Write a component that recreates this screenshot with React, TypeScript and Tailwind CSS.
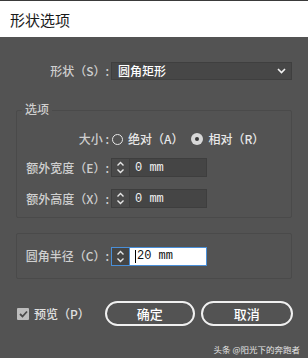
import React from "react";

const font = { fontFamily: '"Noto Sans CJK SC", "Noto Sans", sans-serif' };
const mono = { fontFamily: '"Liberation Mono", "Noto Sans CJK SC", monospace' };

function Spinner({ active }: { active?: boolean }) {
  return (
    <div
      className={`flex h-[19px] w-[19px] flex-col items-center justify-center border ${
        active ? "border-[#4a8fd8] bg-[#454545]" : "border-[#3e3e3e] bg-[#4a4a4a]"
      }`}
    >
      <svg width="9" height="13" viewBox="0 0 9 13" fill="none" stroke="#e6e6e6" strokeWidth="1.4">
        <path d="M1.5 4.5 L4.5 1.5 L7.5 4.5" />
        <path d="M1.5 8.5 L4.5 11.5 L7.5 8.5" />
      </svg>
    </div>
  );
}

function NumberField({ value, active }: { value: string; active?: boolean }) {
  return (
    <div className="flex items-center">
      <Spinner active={active} />
      <div
        className={`flex h-[19px] w-[77px] items-center pl-[5px] text-[12px] ${
          active
            ? "border border-l-0 border-[#4a8fd8] bg-white text-[#111]"
            : "border border-l-0 border-[#3e3e3e] bg-[#454545] text-[#f2f2f2]"
        }`}
        style={mono}
      >
        {active && <span className="mr-[1px] h-[13px] w-px bg-black" />}
        {value}
      </div>
    </div>
  );
}

function Label({ children, w }: { children: React.ReactNode; w: number }) {
  return (
    <div
      className="shrink-0 pr-[2px] text-right text-[12px] font-medium leading-none text-[#cfcfcf]"
      style={{ width: w }}
    >
      {children}
    </div>
  );
}

export default function App() {
  return (
    <div className="flex h-[358px] w-[308px] flex-col overflow-hidden bg-[#535353]" style={font}>
      {/* Title bar */}
      <div className="h-[37px] shrink-0 border-t border-[#3a3a3a] bg-white pl-[10px] pt-[8px] text-[15px] text-[#1a1a1a]">
        形状选项
      </div>

      {/* Shape row */}
      <div className="mt-[25px] flex items-center">
        <Label w={111}>形状（S）:</Label>
        <div className="flex h-[18px] w-[181px] items-center justify-between border border-[#3f3f3f] bg-[#474747] pl-[6px] pr-[5px] text-[12px] font-medium text-white">
          <span>圆角矩形</span>
          <svg width="9" height="6" viewBox="0 0 9 6" fill="none" stroke="#f2f2f2" strokeWidth="1.6">
            <path d="M1 1 L4.5 4.5 L8 1" />
          </svg>
        </div>
      </div>

      {/* Options group */}
      <div className="relative mx-[16px] mt-[30px] h-[108px] rounded-[2px] border border-[#4a4a4a]">
        <div className="absolute left-[5px] top-[-8px] bg-[#535353] px-[3px] text-[12px] font-medium leading-none text-[#cfcfcf]">
          选项
        </div>
        <div className="mt-[19px] flex items-center">
          <Label w={94}>大小 :</Label>
          <div className="ml-[1px] flex items-center text-[12px] font-medium text-[#e8e8e8]">
            <span className="h-[11px] w-[11px] rounded-full border border-[#e8e8e8]" />
            <span className="ml-[5px]">绝对（A）</span>
            <span className="ml-[8px] flex h-[12px] w-[12px] items-center justify-center rounded-full bg-[#d8d8d8]">
              <span className="h-[4px] w-[4px] rounded-full bg-[#3a3a3a]" />
            </span>
            <span className="ml-[5px]">相对（R）</span>
          </div>
        </div>
        <div className="mt-[10px] flex items-center">
          <Label w={94}>额外宽度（E）:</Label>
          <NumberField value="0 mm" />
        </div>
        <div className="mt-[12px] flex items-center">
          <Label w={94}>额外高度（X）:</Label>
          <NumberField value="0 mm" />
        </div>
      </div>

      {/* Corner radius group */}
      <div className="mx-[16px] mt-[15px] flex h-[46px] items-center rounded-[2px] border border-[#4a4a4a]">
        <Label w={94}>圆角半径（C）:</Label>
        <NumberField value="20 mm" active />
      </div>

      {/* Bottom row */}
      <div className="mt-[22px] flex items-center pl-[17px]">
        <span className="flex h-[12px] w-[12px] items-center justify-center rounded-[1px] bg-[#bdbdbd]">
          <svg width="9" height="8" viewBox="0 0 9 8" fill="none" stroke="#4a4a4a" strokeWidth="1.8">
            <path d="M1 4 L3.5 6.5 L8 1.5" />
          </svg>
        </span>
        <span className="ml-[5px] text-[12px] font-medium text-[#e0e0e0]">预览（P）</span>
        <button className="ml-[15px] h-[25px] w-[90px] rounded-full border-2 border-[#f0f0f0] text-[13px] font-medium text-white">
          确定
        </button>
        <button className="ml-[6px] h-[25px] w-[92px] rounded-full border-2 border-[#f0f0f0] text-[13px] font-medium text-white">
          取消
        </button>
      </div>

      <div className="mt-auto flex justify-end pb-[5px] pr-[8px] text-[8.5px] leading-none text-[#e6e6e6]">
        头条 @阳光下的奔跑者
      </div>
    </div>
  );
}
